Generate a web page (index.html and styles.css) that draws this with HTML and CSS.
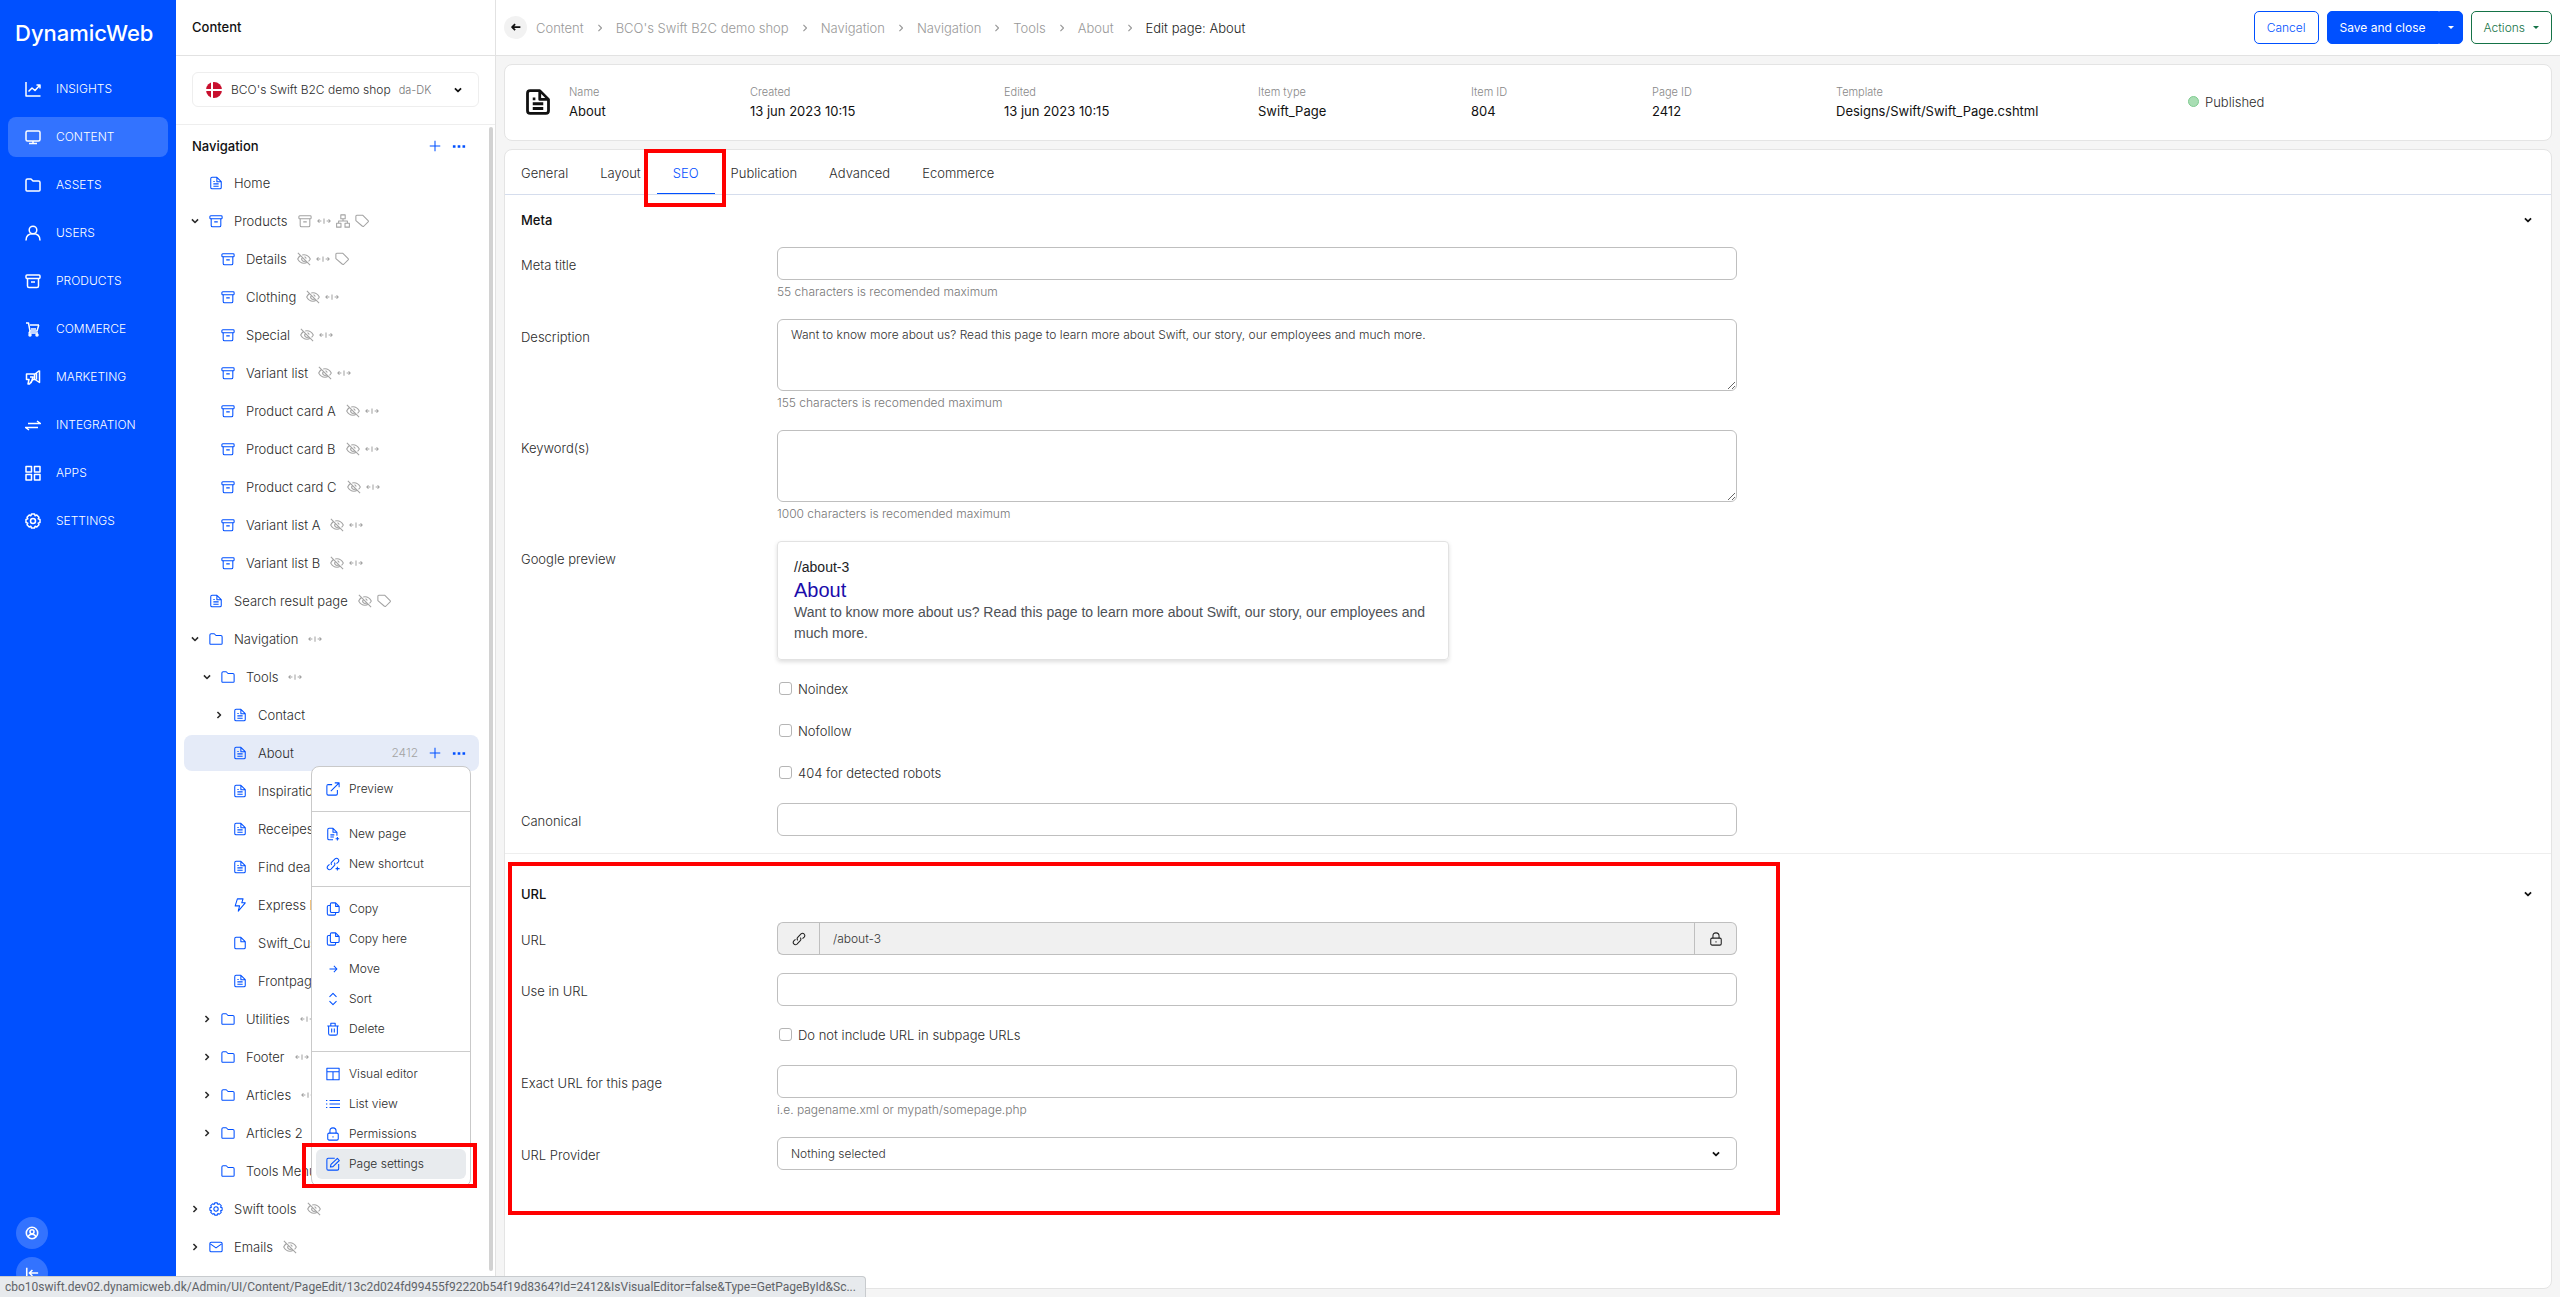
FILE: index.html
```
<!DOCTYPE html>
<html lang="en">
<head>
<meta charset="utf-8">
<title>Edit page: About</title>
<meta name="viewport" content="width=device-width, initial-scale=1">
<link rel="stylesheet" href="styles.css">
</head>
<body>
<svg class="sprite" aria-hidden="true">
  <symbol id="chart" viewBox="0 0 16 16"><path d="M1 1v14h14.500M3.500 10.500l3.500-3.500 3 2.500L15 4M11.500 4H15v3.500"/></symbol>
  <symbol id="screen" viewBox="0 0 16 16"><rect x="1" y="2" width="14" height="10" rx="1.500"/><path d="M4 14.500h8M8 12v2.500"/></symbol>
  <symbol id="folder" viewBox="0 0 16 16"><path d="M1 13V3.500Q1 2 2.500 2H6l2 2h5.500Q15 4 15 5.500V13q0 1-1 1H2q-1 0-1-1z"/></symbol>
  <symbol id="user" viewBox="0 0 16 16"><circle cx="8" cy="5" r="3.800"/><path d="M1 15.500c0-4.500 3-6.700 7-6.700s7 2.200 7 6.700"/></symbol>
  <symbol id="box" viewBox="0 0 16 16"><rect x="1" y="2" width="14" height="3.500" rx="1"/><path d="M2.500 5.500V13q0 1.500 1.500 1.500h8q1.500 0 1.500-1.500V5.500M6 9h4"/></symbol>
  <symbol id="cart" viewBox="0 0 16 16"><path d="M1 2h2.500L5 10h7l1.800-6M5 10l-1 2h9M5 4h9M6 8h5"/><circle cx="5" cy="14" r="1"/><circle cx="12" cy="14" r="1"/></symbol>
  <symbol id="horn" viewBox="0 0 16 16"><path d="M14.500 1.500v12L10 10.500H8L4.500 15H3l1-4.500H1.500V5H10l4.500-3.500M9.500 5v5M5 8h3L6 14M11.500 4.500v6"/></symbol>
  <symbol id="swap" viewBox="0 0 16 16"><path d="M3 6.500h12.500L12 4M13 10.500H.5L4 13"/></symbol>
  <symbol id="grid" viewBox="0 0 16 16"><path d="M1 1.500h5.500V7H1zM9.500 1.500H15V7H9.500zM1 9.500h5.500V15H1zM9.500 9.500H15V15H9.500z"/></symbol>
  <symbol id="gear" viewBox="0 0 16 16"><path d="M6.500 1h3l.6 1.800 1.700-.8 2.200 2.200-.8 1.700 1.800.6v3l-1.800.6.8 1.700-2.200 2.200-1.700-.8L9.500 15h-3l-.6-1.800-1.700.8L2 11.800l.8-1.700L1 9.500v-3l1.800-.6L2 4.200 4.200 2l1.700.8z"/><circle cx="8" cy="8" r="2.500"/></symbol>
  <symbol id="person" viewBox="0 0 16 16"><circle cx="8" cy="8" r="6.500"/><circle cx="8" cy="6.500" r="2.300"/><path d="M3.500 12.500c1-2.500 2.500-3 4.500-3s3.500.5 4.500 3"/></symbol>
  <symbol id="collapse" viewBox="0 0 16 16"><path d="M2 2v12M15 8H5M8.500 4.500L5 8l3.500 3.500"/></symbol>
  <symbol id="page" viewBox="0 0 16 16"><path d="M2 13V3q0-1.500 1.500-1.500H9L14 6.500V13q0 1.500-1.500 1.500h-9Q2 14.500 2 13zM9 1.500v5h5M5 9h6M5 11.700h6M5 6.200h1.500"/></symbol>
  <symbol id="blank" viewBox="0 0 16 16"><path d="M2 13V3q0-1.500 1.500-1.500H9L14 6.500V13q0 1.500-1.500 1.500h-9Q2 14.500 2 13zM9 1.500v5h5"/></symbol>
  <symbol id="bolt" viewBox="0 0 16 16"><path d="M5 1h6.500L10 5.500h4L6 15l1.500-6H2.500z"/></symbol>
  <symbol id="mail" viewBox="0 0 16 16"><rect x="1" y="2.500" width="14" height="11" rx="1.500"/><path d="M1.500 4.500L8 9l6.500-4.500"/></symbol>
  <symbol id="hidden" viewBox="0 0 16 16"><path d="M1 1l14 14M4 4Q2 5.500 .8 8q2.500 4.800 7.200 4.800 2 0 3.800-1M6 3.400q1-.3 2-.3 4.700 0 7.200 4.900-.8 1.600-2 2.700M6.200 6.300a2.500 2.500 0 0 0 3.500 3.600M8.500 5.500q1.700.3 2 2"/></symbol>
  <symbol id="width" viewBox="0 0 16 16"><path d="M5 8H.8M2.800 6L.8 8l2 2M11 8h4.200M13.200 6l2 2-2 2M8 5v6"/></symbol>
  <symbol id="tree" viewBox="0 0 16 16"><path d="M5.500 1h5v4.500h-5zM.7 10.500h5V15h-5zM10.300 10.500h5V15h-5zM8 5.500V8M3 10.500V8h10v2.500"/></symbol>
  <symbol id="tag" viewBox="0 0 16 16"><path d="M1 2.500Q1 1.500 2 1.500h7L15 7.500q.7.700 0 1.500l-5 5q-.8.700-1.500 0L1 7.500z"/></symbol>
  <symbol id="down" viewBox="0 0 16 16"><path d="M4.500 6.200L8 9.700l3.500-3.500"/></symbol>
  <symbol id="right" viewBox="0 0 16 16"><path d="M6.200 4.500L9.700 8l-3.500 3.500"/></symbol>
  <symbol id="plus" viewBox="0 0 16 16"><path d="M8 2v12M2 8h12"/></symbol>
  <symbol id="dots" viewBox="0 0 16 16"><path d="M1 7h3v3H1zM6.500 7h3v3h-3zM12 7h3v3h-3z" fill="currentColor" stroke="none"/></symbol>
  <symbol id="back" viewBox="0 0 16 16"><path d="M13 7H3.500M7 3.500L3.500 7 7 10.500"/></symbol>
  <symbol id="external" viewBox="0 0 16 16"><path d="M7 3H2.500Q1 3 1 4.500v9Q1 15 2.500 15h9q1.500 0 1.500-1.500V9M5.500 10.500L15 1M10 1h5v5"/></symbol>
  <symbol id="newpage" viewBox="0 0 16 16"><path d="M8 14.500H3.500Q2 14.500 2 13V3q0-1.500 1.500-1.500H8L12.500 6v4M8 1.500V6h4.500M5 9h4.500M5 11.500h4M13 11.500v4M11 13.500h4"/></symbol>
  <symbol id="link" viewBox="0 0 16 16"><path d="M6.500 9.500q-1.500-1.800.3-3.700l3.500-3.600q1.900-1.600 3.600.1 1.500 1.700 0 3.500L12 7.700M9.500 6.500q1.500 1.800-.3 3.700l-3.500 3.600q-1.900 1.600-3.600-.1-1.500-1.700 0-3.500L4 8.300"/></symbol>
  <symbol id="newlink" viewBox="0 0 16 16"><path d="M6.500 9q-1.500-1.600.3-3.500l3.500-3.300q1.900-1.600 3.600.1 1.500 1.700 0 3.500L12 7.500M9.500 6.500q1.500 1.800-.3 3.700l-3.500 3.600q-1.900 1.600-3.600-.1-1.500-1.700 0-3.500L4 8.300M13 11v4.500M11 13.300h4.500"/></symbol>
  <symbol id="copy" viewBox="0 0 16 16"><path d="M5 2.500Q5 1 6.500 1H11l4 4v5.500q0 1.500-1.500 1.500h-7Q5 12 5 10.500zM11 1v4h4M5 4H3Q1.500 4 1.500 5.500V13q0 2 2 2h6q1.500 0 1.500-1.500V12"/></symbol>
  <symbol id="move" viewBox="0 0 16 16"><path d="M4 8h8.500M9 4.500L12.500 8 9 11.500"/></symbol>
  <symbol id="sort" viewBox="0 0 16 16"><path d="M4 5.500L8 1.500l4 4M4 10.500l4 4 4-4"/></symbol>
  <symbol id="trash" viewBox="0 0 16 16"><path d="M1.500 4.500h13M3 4.500V13q0 2 2 2h6q2 0 2-2V4.500M5.500 4.500v-3h5v3M6.500 7.500v4.500M9.500 7.500v4.500"/></symbol>
  <symbol id="layout" viewBox="0 0 16 16"><path d="M1 1.500h14v13H1zM1 5.500h14M8 5.500v9"/></symbol>
  <symbol id="list" viewBox="0 0 16 16"><path d="M4 4h12M4 8h12M4 12h12M0 4h1.500M0 8h1.500M0 12h1.500"/></symbol>
  <symbol id="lock" viewBox="0 0 16 16"><rect x="2" y="7" width="12" height="8" rx="1.500"/><path d="M4.500 7V4.500Q4.500 1 8 1t3.500 3.500V7M8 10.500v1.500"/></symbol>
  <symbol id="edit" viewBox="0 0 16 16"><path d="M14.500 8v5.500q0 1.500-1.500 1.500H2.500Q1 15 1 13.500V3q0-1.500 1.500-1.500H10M5 11.500l.7-3L13 1.500 15.200 4 8 11z"/></symbol>
</svg>

<div class="app">
  <nav class="rail" aria-label="Main">
    <div class="logo">DynamicWeb</div>
    <a class="rail-item" href="#"><svg class="ico"><use href="#chart"/></svg>INSIGHTS</a>
    <a class="rail-item active" href="#"><svg class="ico"><use href="#screen"/></svg>CONTENT</a>
    <a class="rail-item" href="#"><svg class="ico"><use href="#folder"/></svg>ASSETS</a>
    <a class="rail-item" href="#"><svg class="ico"><use href="#user"/></svg>USERS</a>
    <a class="rail-item" href="#"><svg class="ico"><use href="#box"/></svg>PRODUCTS</a>
    <a class="rail-item" href="#"><svg class="ico"><use href="#cart"/></svg>COMMERCE</a>
    <a class="rail-item" href="#"><svg class="ico"><use href="#horn"/></svg>MARKETING</a>
    <a class="rail-item" href="#"><svg class="ico"><use href="#swap"/></svg>INTEGRATION</a>
    <a class="rail-item" href="#"><svg class="ico"><use href="#grid"/></svg>APPS</a>
    <a class="rail-item" href="#"><svg class="ico"><use href="#gear"/></svg>SETTINGS</a>
    <div class="rail-foot">
      <button class="round" aria-label="Profile"><svg class="ico"><use href="#person"/></svg></button>
      <button class="round" aria-label="Collapse"><svg class="ico"><use href="#collapse"/></svg></button>
    </div>
  </nav>

  <aside class="panel">
    <h2 class="panel-title">Content</h2>
    <div class="site-wrap">
      <button class="site">
        <svg class="flag" viewBox="0 0 16 16"><circle cx="8" cy="8" r="8" fill="#c8102e"/><path d="M6 0v16M0 8h16" stroke="#fff" stroke-width="2"/></svg>
        <span>BCO's Swift B2C demo shop</span><small>da-DK</small>
        <svg class="ico bold"><use href="#down"/></svg>
      </button>
    </div>
    <div class="tree-wrap">
      <div class="tree">
        <div class="tree-head"><h3>Navigation</h3><button class="mini" aria-label="Add"><svg class="ico"><use href="#plus"/></svg></button><button class="mini" aria-label="More"><svg class="ico"><use href="#dots"/></svg></button></div>
        <div class="row"><i class="tog"></i><svg class="ico"><use href="#page"/></svg><a href="#">Home</a></div>
        <div class="row"><svg class="tog"><use href="#down"/></svg><svg class="ico"><use href="#box"/></svg><a href="#">Products</a><span class="marks"><svg><use href="#box"/></svg><svg><use href="#width"/></svg><svg><use href="#tree"/></svg><svg><use href="#tag"/></svg></span></div>
        <div class="row l1"><i class="tog"></i><svg class="ico"><use href="#box"/></svg><a href="#">Details</a><span class="marks"><svg><use href="#hidden"/></svg><svg><use href="#width"/></svg><svg><use href="#tag"/></svg></span></div>
        <div class="row l1"><i class="tog"></i><svg class="ico"><use href="#box"/></svg><a href="#">Clothing</a><span class="marks"><svg><use href="#hidden"/></svg><svg><use href="#width"/></svg></span></div>
        <div class="row l1"><i class="tog"></i><svg class="ico"><use href="#box"/></svg><a href="#">Special</a><span class="marks"><svg><use href="#hidden"/></svg><svg><use href="#width"/></svg></span></div>
        <div class="row l1"><i class="tog"></i><svg class="ico"><use href="#box"/></svg><a href="#">Variant list</a><span class="marks"><svg><use href="#hidden"/></svg><svg><use href="#width"/></svg></span></div>
        <div class="row l1"><i class="tog"></i><svg class="ico"><use href="#box"/></svg><a href="#">Product card A</a><span class="marks"><svg><use href="#hidden"/></svg><svg><use href="#width"/></svg></span></div>
        <div class="row l1"><i class="tog"></i><svg class="ico"><use href="#box"/></svg><a href="#">Product card B</a><span class="marks"><svg><use href="#hidden"/></svg><svg><use href="#width"/></svg></span></div>
        <div class="row l1"><i class="tog"></i><svg class="ico"><use href="#box"/></svg><a href="#">Product card C</a><span class="marks"><svg><use href="#hidden"/></svg><svg><use href="#width"/></svg></span></div>
        <div class="row l1"><i class="tog"></i><svg class="ico"><use href="#box"/></svg><a href="#">Variant list A</a><span class="marks"><svg><use href="#hidden"/></svg><svg><use href="#width"/></svg></span></div>
        <div class="row l1"><i class="tog"></i><svg class="ico"><use href="#box"/></svg><a href="#">Variant list B</a><span class="marks"><svg><use href="#hidden"/></svg><svg><use href="#width"/></svg></span></div>
        <div class="row"><i class="tog"></i><svg class="ico"><use href="#page"/></svg><a href="#">Search result page</a><span class="marks"><svg><use href="#hidden"/></svg><svg><use href="#tag"/></svg></span></div>
        <div class="row"><svg class="tog"><use href="#down"/></svg><svg class="ico"><use href="#folder"/></svg><a href="#">Navigation</a><span class="marks"><svg><use href="#width"/></svg></span></div>
        <div class="row l1"><svg class="tog"><use href="#down"/></svg><svg class="ico"><use href="#folder"/></svg><a href="#">Tools</a><span class="marks"><svg><use href="#width"/></svg></span></div>
        <div class="row l2"><svg class="tog"><use href="#right"/></svg><svg class="ico"><use href="#page"/></svg><a href="#">Contact</a></div>
        <div class="row l2 selected"><i class="tog"></i><svg class="ico"><use href="#page"/></svg><a href="#">About</a>
          <span class="id">2412</span><button class="mini" aria-label="Add"><svg class="ico"><use href="#plus"/></svg></button><button class="mini" aria-label="More"><svg class="ico"><use href="#dots"/></svg></button>
          <div class="menu">
            <div class="group">
              <button class="cmd"><svg class="ico"><use href="#external"/></svg>Preview</button>
            </div>
            <div class="group">
              <button class="cmd"><svg class="ico"><use href="#newpage"/></svg>New page</button>
              <button class="cmd"><svg class="ico"><use href="#newlink"/></svg>New shortcut</button>
            </div>
            <div class="group">
              <button class="cmd"><svg class="ico"><use href="#copy"/></svg>Copy</button>
              <button class="cmd"><svg class="ico"><use href="#copy"/></svg>Copy here</button>
              <button class="cmd"><svg class="ico"><use href="#move"/></svg>Move</button>
              <button class="cmd"><svg class="ico"><use href="#sort"/></svg>Sort</button>
              <button class="cmd"><svg class="ico"><use href="#trash"/></svg>Delete</button>
            </div>
            <div class="group">
              <button class="cmd"><svg class="ico"><use href="#layout"/></svg>Visual editor</button>
              <button class="cmd"><svg class="ico"><use href="#list"/></svg>List view</button>
              <button class="cmd"><svg class="ico"><use href="#lock"/></svg>Permissions</button>
              <button class="cmd hover"><svg class="ico"><use href="#edit"/></svg>Page settings</button>
            </div>
          </div>
        </div>
        <div class="row l2"><i class="tog"></i><svg class="ico"><use href="#page"/></svg><a href="#">Inspiration</a></div>
        <div class="row l2"><i class="tog"></i><svg class="ico"><use href="#page"/></svg><a href="#">Receipes</a></div>
        <div class="row l2"><i class="tog"></i><svg class="ico"><use href="#page"/></svg><a href="#">Find dealer</a></div>
        <div class="row l2"><i class="tog"></i><svg class="ico"><use href="#bolt"/></svg><a href="#">Express Buy</a></div>
        <div class="row l2"><i class="tog"></i><svg class="ico"><use href="#blank"/></svg><a href="#">Swift_Cust</a></div>
        <div class="row l2"><i class="tog"></i><svg class="ico"><use href="#page"/></svg><a href="#">Frontpage</a></div>
        <div class="row l1"><svg class="tog"><use href="#right"/></svg><svg class="ico"><use href="#folder"/></svg><a href="#">Utilities</a><span class="marks"><svg><use href="#width"/></svg></span></div>
        <div class="row l1"><svg class="tog"><use href="#right"/></svg><svg class="ico"><use href="#folder"/></svg><a href="#">Footer</a><span class="marks"><svg><use href="#width"/></svg></span></div>
        <div class="row l1"><svg class="tog"><use href="#right"/></svg><svg class="ico"><use href="#folder"/></svg><a href="#">Articles</a><span class="marks"><svg><use href="#width"/></svg></span></div>
        <div class="row l1"><svg class="tog"><use href="#right"/></svg><svg class="ico"><use href="#folder"/></svg><a href="#">Articles 2</a></div>
        <div class="row l1"><i class="tog"></i><svg class="ico"><use href="#folder"/></svg><a href="#">Tools Menu</a></div>
        <div class="row"><svg class="tog"><use href="#right"/></svg><svg class="ico"><use href="#gear"/></svg><a href="#">Swift tools</a><span class="marks"><svg><use href="#hidden"/></svg></span></div>
        <div class="row"><svg class="tog"><use href="#right"/></svg><svg class="ico"><use href="#mail"/></svg><a href="#">Emails</a><span class="marks"><svg><use href="#hidden"/></svg></span></div>
      </div>
      <div class="scroll"></div>
    </div>
  </aside>

  <main class="main">
    <header class="top">
      <button class="back" aria-label="Back"><svg class="ico bold"><use href="#back"/></svg></button>
      <nav class="crumbs" aria-label="Breadcrumb">
        <a href="#">Content</a><svg><use href="#right"/></svg><a href="#">BCO's Swift B2C demo shop</a><svg><use href="#right"/></svg><a href="#">Navigation</a><svg><use href="#right"/></svg><a href="#">Navigation</a><svg><use href="#right"/></svg><a href="#">Tools</a><svg><use href="#right"/></svg><a href="#">About</a><svg><use href="#right"/></svg><span>Edit page: About</span>
      </nav>
      <div class="actions">
        <button class="btn outline">Cancel</button>
        <div class="split"><button class="btn solid">Save and close</button><button class="btn solid caret" aria-label="More save options"><i class="tri"></i></button></div>
        <button class="btn green">Actions<i class="tri"></i></button>
      </div>
    </header>

    <section class="card info">
      <svg class="ico big"><use href="#page"/></svg>
      <dl class="facts">
        <div><dt>Name</dt><dd>About</dd></div>
        <div><dt>Created</dt><dd>13 jun 2023 10:15</dd></div>
        <div><dt>Edited</dt><dd>13 jun 2023 10:15</dd></div>
        <div><dt>Item type</dt><dd>Swift_Page</dd></div>
        <div><dt>Item ID</dt><dd>804</dd></div>
        <div><dt>Page ID</dt><dd>2412</dd></div>
        <div><dt>Template</dt><dd>Designs/Swift/Swift_Page.cshtml</dd></div>
        <div class="status"><i class="dot"></i>Published</div>
      </dl>
    </section>

    <section class="card editor">
      <nav class="tabs" aria-label="Page settings">
        <a href="#">General</a><a href="#">Layout</a><a class="active" href="#">SEO</a><a href="#">Publication</a><a href="#">Advanced</a><a href="#">Ecommerce</a>
      </nav>

      <div class="section">
        <div class="section-head"><h3>Meta</h3><svg class="ico bold"><use href="#down"/></svg></div>
        <div class="field"><label for="title">Meta title</label><div><input class="text" id="title"><p class="help">55 characters is recomended maximum</p></div></div>
        <div class="field"><label for="desc">Description</label><div><textarea class="text" id="desc">Want to know more about us? Read this page to learn more about Swift, our story, our employees and much more.</textarea><p class="help">155 characters is recomended maximum</p></div></div>
        <div class="field"><label for="keys">Keyword(s)</label><div><textarea class="text" id="keys"></textarea><p class="help">1000 characters is recomended maximum</p></div></div>
        <div class="field"><span class="label">Google preview</span><div><div class="google"><cite>//about-3</cite><a href="#">About</a><p>Want to know more about us? Read this page to learn more about Swift, our story, our employees and much more.</p></div></div></div>
        <div class="field checks"><span></span><div>
          <label class="check"><input type="checkbox">Noindex</label>
          <label class="check"><input type="checkbox">Nofollow</label>
          <label class="check"><input type="checkbox">404 for detected robots</label>
        </div></div>
        <div class="field"><label for="canon">Canonical</label><div><input class="text" id="canon"></div></div>
      </div>

      <div class="section marked">
        <div class="section-head"><h3>URL</h3><svg class="ico bold"><use href="#down"/></svg></div>
        <div class="field"><label for="url">URL</label><div class="combo"><span class="addon"><svg class="ico"><use href="#link"/></svg></span><input class="text" id="url" value="/about-3" readonly><button class="addon" aria-label="Unlock"><svg class="ico"><use href="#lock"/></svg></button></div></div>
        <div class="field"><label for="use">Use in URL</label><div><input class="text" id="use"></div></div>
        <div class="field checks"><span></span><div><label class="check"><input type="checkbox">Do not include URL in subpage URLs</label></div></div>
        <div class="field"><label for="exact">Exact URL for this page</label><div><input class="text" id="exact"><p class="help">i.e. pagename.xml or mypath/somepage.php</p></div></div>
        <div class="field"><label for="provider">URL Provider</label><div class="select"><select class="text" id="provider"><option>Nothing selected</option></select><svg class="ico bold"><use href="#down"/></svg></div></div>
      </div>
    </section>
  </main>
</div>
<div class="statusbar">cbo10swift.dev02.dynamicweb.dk/Admin/UI/Content/PageEdit/13c2d024fd99455f92220b54f19d8364?Id=2412&amp;IsVisualEditor=false&amp;Type=GetPageById&amp;Sc...</div>
</body>
</html>
```
FILE: styles.css
```
*, *::before, *::after { box-sizing: border-box; }
body { margin: 0; font: 300 13px/20px Inter, "Liberation Sans", sans-serif; color: #2b2b2b; background: #f5f5f5; }
h2, h3, p, dl, dd { margin: 0; }
h2, h3 { font-size: 13px; font-weight: 500; color: #111; }
a { color: inherit; text-decoration: none; }
button { font: inherit; color: inherit; background: none; border: 0; padding: 0; }
svg { fill: none; stroke: currentColor; stroke-width: 1.2; stroke-linejoin: round; flex: none; }
.sprite { position: absolute; width: 0; height: 0; }
.ico { width: 14px; height: 14px; display: block; }
.bold { stroke-width: 2; color: #111; }

.app { display: flex; height: 100vh; overflow: hidden; }

/* Blue main navigation */
.rail { width: 176px; flex: none; background: #0050ff; color: #fff; padding: 0 8px 8px; display: flex; flex-direction: column; gap: 8px; }
.logo { font: 500 22px/61px Inter, sans-serif; padding-top: 3px; height: 61px; padding-left: 7px; }
.rail-item { display: flex; align-items: center; gap: 15px; height: 40px; flex: none; padding-left: 17px; border-radius: 8px; font-size: 12px; }
.rail-item .ico { width: 16px; height: 16px; stroke-width: 1.5; }
.rail-item.active { background: #3373ff; }
.rail-foot { margin-top: auto; padding-left: 8px; display: flex; flex-direction: column; gap: 8px; }
.round { width: 32px; height: 32px; border-radius: 50%; background: #3373ff; display: grid; place-items: center; }
.round .ico { stroke-width: 1.8; }

/* Content tree */
.panel { width: 320px; flex: none; background: #fff; border-right: 1px solid #e2e2e2; display: flex; flex-direction: column; }
.panel-title { height: 56px; line-height: 55px; padding-left: 16px; border-bottom: 1px solid #e2e2e2; }
.site-wrap { padding: 16px 16px 17px; border-bottom: 1px solid #eee; }
.site { width: 287px; height: 35px; display: flex; align-items: center; padding: 0 13px; border: 1px solid #eee; border-radius: 6px; font-size: 12px; }
.site small { font-size: 11px; color: #777; margin-left: 8px; }
.site .ico { margin-left: auto; }
.flag { width: 16px; height: 16px; margin-right: 9px; stroke: none; }
.tree-wrap { display: flex; flex: 1; padding: 2px 2px 26px 8px; }
.tree { flex: 1; }
.scroll { width: 4px; margin-left: 10px; border-radius: 2px; background: #d2d2d2; }
.tree-head { display: flex; align-items: center; height: 38px; padding: 0 13px 0 8px; }
.tree-head h3 { margin-right: auto; }
.mini { color: #0050ff; margin-left: 10px; }
.row { position: relative; display: flex; align-items: center; height: 36px; margin: 0 0 2px; padding: 0 13px 0 4px; border-radius: 8px; color: #2b2b2b; }
.row > .ico { color: #0050ff; }
.row a { margin-left: 11px; }
.row.l1 { padding-left: 16px; }
.row.l2 { padding-left: 28px; }
.row.selected { background: #e5ebf8; z-index: 1; }
.tog { width: 14px; height: 14px; margin-right: 7px; stroke-width: 1.8; }
.marks { display: flex; gap: 5px; margin-left: 10px; color: #a3a3a3; }
.marks svg { width: 14px; height: 14px; }
.id { margin-left: auto; font-size: 12px; color: #a3a3a3; }

/* Context menu of the selected page */
.menu { position: absolute; top: 31px; right: 8px; width: 160px; background: #fff; border: 1px solid #c9c9c9; border-radius: 8px; font-size: 12px; }
.group { padding: 7px 4px; }
.group + .group { border-top: 1px solid #ccc; }
.cmd { position: relative; display: flex; align-items: center; gap: 9px; width: 100%; height: 30px; padding-left: 10px; border-radius: 6px; }
.cmd .ico { color: #0050ff; }
.cmd.hover { background: #e8ebee; }
.cmd.hover::after { content: ""; position: absolute; inset: -6px -11px -9px -14px; border: 4px solid #f00; }

/* Main area */
.main { flex: 1; min-width: 0; display: flex; flex-direction: column; }
.top { height: 56px; flex: none; display: flex; align-items: center; background: #fff; border-bottom: 1px solid #e2e2e2; padding: 0 8px; }
.back { width: 23px; height: 23px; border-radius: 50%; background: #f2f2f2; display: grid; place-items: center; margin-right: 9px; }
.crumbs { display: flex; align-items: center; gap: 9px; color: #999; }
.crumbs svg { width: 14px; height: 14px; stroke-width: 1.3; }
.crumbs span { color: #222; }
.actions { margin-left: auto; display: flex; gap: 8px; }
.btn { height: 33px; padding: 0 12px; border-radius: 5px; border: 1px solid; font-size: 12px; display: flex; align-items: center; gap: 8px; }
.outline { color: #0050ff; }
.solid { background: #0050ff; border-color: #0050ff; color: #fff; font-weight: 400; }
.split { display: flex; }
.split .btn:first-child { border-radius: 5px 0 0 5px; }
.split .caret { border-radius: 0 5px 5px 0; padding: 0 8px; }
.green { color: #157347; }
.tri { border: 3px solid transparent; border-top-color: currentColor; border-bottom: 0; }
.card { margin: 8px 8px 0; background: #fff; border: 1px solid #e4e4e4; border-radius: 8px; }
.info { display: flex; align-items: center; height: 77px; flex: none; padding: 0 16px 2px; }
.big { width: 28px; height: 28px; margin: 0 17px 0 3px; color: #111; stroke-width: 1.6; }
.facts { flex: 1; display: grid; grid-template-columns: 181fr 254fr 254fr 213fr 181fr 184fr 352fr 347fr; align-items: center; }
.facts > div { min-width: 0; white-space: nowrap; }
dt { font-size: 11px; line-height: 18px; color: #888; }
dd { font-weight: 400; color: #111; }
.status { display: flex; align-items: center; gap: 6px; }
.dot { width: 11px; height: 11px; border-radius: 50%; background: #a9deb4; border: 1px solid #7fcb90; }

/* Settings form */
.editor { flex: 1; margin-bottom: 8px; }
.tabs { display: flex; height: 45px; border-bottom: 1px solid #d5dded; }
.tabs a { position: relative; padding: 0 16px; line-height: 47px; height: 44px; }
.tabs .active { color: #0050ff; border-bottom: 1px solid #0050ff; }
.tabs .active::after { content: ""; position: absolute; inset: -1px -11px -14px -13px; border: 4px solid #f00; }
.section { position: relative; padding: 0 16px 17px; display: flex; flex-direction: column; gap: 18px; }
.section + .section { border-top: 1px solid #eee; }
.section-head { display: flex; justify-content: space-between; align-items: center; height: 34px; padding-top: 16px; }
.marked::before { content: ""; position: absolute; left: 3px; top: 8px; width: 1272px; height: 353px; border: 4px solid #f00; pointer-events: none; }
.marked .section-head { height: 50px; padding-top: 30px; }
.field { display: grid; grid-template-columns: 256px minmax(0, 960px); }
.field > label, .label { padding-top: 8px; }
.text { display: block; width: 100%; height: 33px; border: 1px solid #bfbfbf; border-radius: 6px; padding: 0 13px; background: #fff; font: inherit; font-size: 12px; color: #333; appearance: none; }
textarea.text { height: 72px; padding: 5px 13px; line-height: 20px; resize: vertical; }
.help { font-size: 12px; line-height: 18px; color: #777; padding-top: 3px; }
.google { width: 672px; padding: 15px 16px 16px; height: 119px; border: 1px solid #e2e2e2; border-radius: 4px; box-shadow: 0 2px 4px #0002; font: 14px/21px "Liberation Sans", Arial, sans-serif; color: #4d5156; }
.google cite { display: block; font-style: normal; color: #202124; }
.google a { display: block; font-size: 20px; line-height: 24px; color: #1a0dab; }
.checks { padding-bottom: 2px; }
.check { display: flex; align-items: center; gap: 6px; height: 21px; }
.check + .check { margin-top: 21px; }
.check input { appearance: none; width: 13px; height: 13px; margin: 0 0 0 2px; border: 1px solid #b5b5b5; border-radius: 3px; }
.combo { display: flex; }
.combo .text { border-radius: 0; background: #f0f0f0; }
.addon { width: 42px; flex: none; display: grid; place-items: center; border: 1px solid #bfbfbf; background: #f0f0f0; color: #222; }
.addon:first-child { border-right: 0; border-radius: 6px 0 0 6px; }
.addon:last-child { border-left: 0; border-radius: 0 6px 6px 0; }
.select { display: grid; align-items: center; }
.select > * { grid-area: 1 / 1; }
.select .ico { justify-self: end; margin-right: 14px; pointer-events: none; }

.statusbar { position: fixed; left: 0; bottom: 0; z-index: 5; height: 21px; padding: 0 9px 0 5px; background: #e7eaed; border: solid #c8cbce; border-width: 1px 1px 0 0; border-radius: 0 4px 0 0; font: 400 12px/20px Roboto, sans-serif; color: #5f6368; }
```
